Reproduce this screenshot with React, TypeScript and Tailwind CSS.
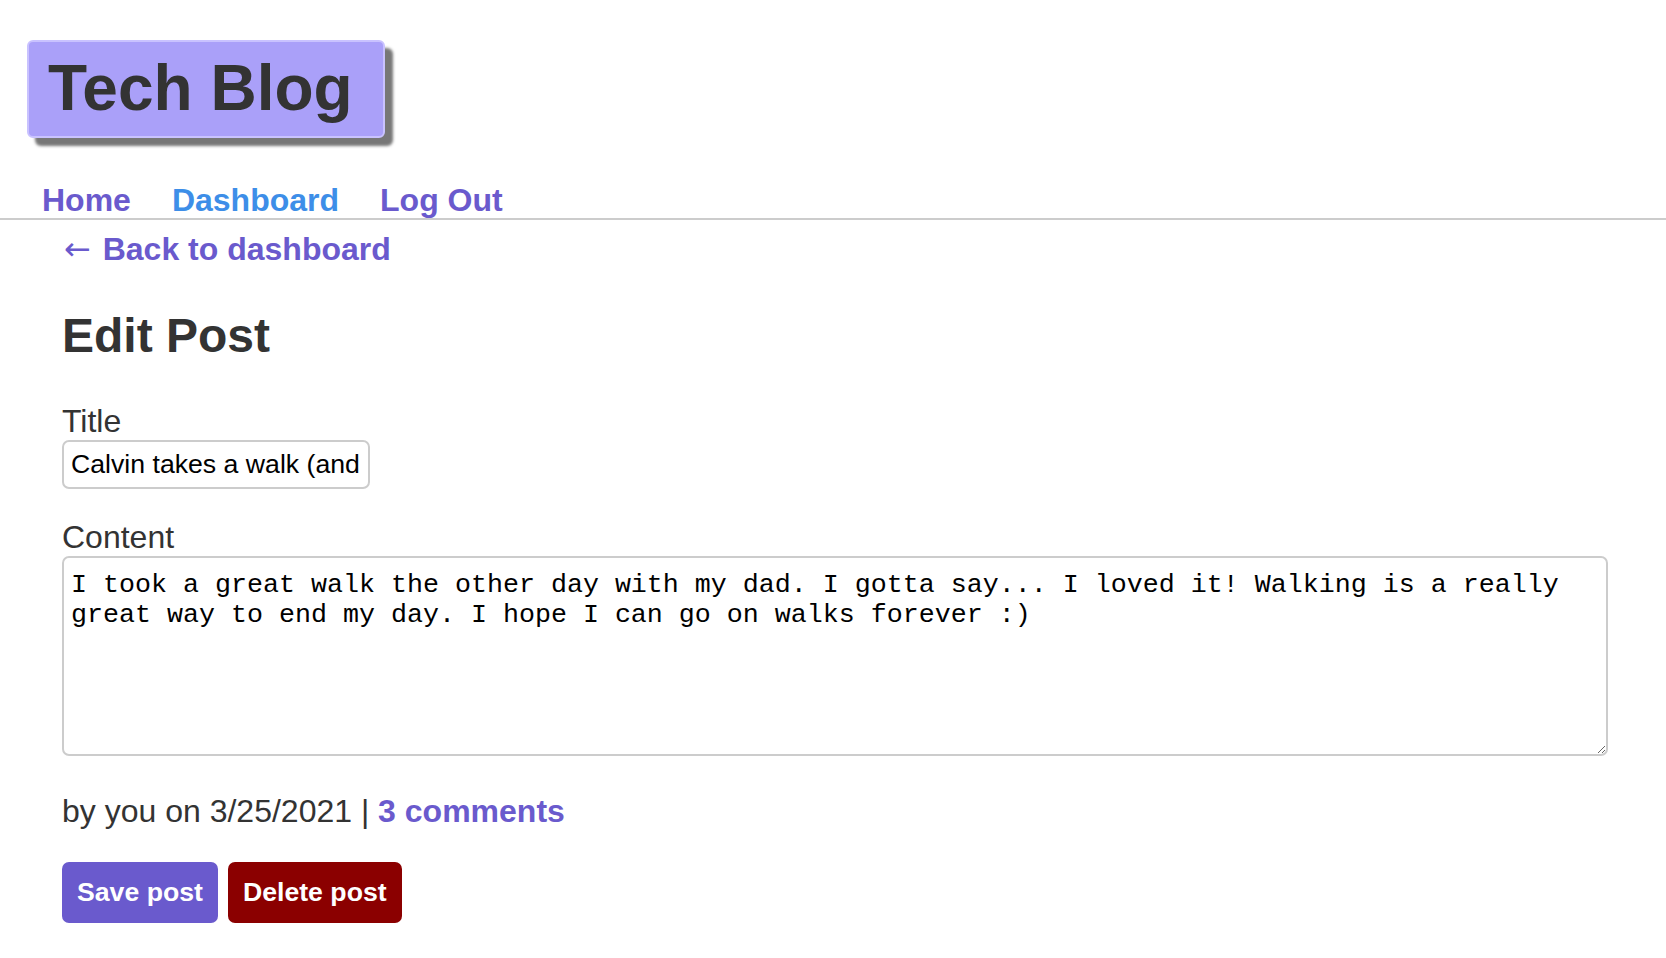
import { useState } from 'react';

export default function App() {
  const [title, setTitle] = useState('Calvin takes a walk (and his dad too)');
  const [content, setContent] = useState(
    'I took a great walk the other day with my dad. I gotta say... I loved it! Walking is a really great way to end my day. I hope I can go on walks forever :)'
  );

  return (
    <div className="min-h-screen bg-white text-[#333] font-['Liberation_Sans',Arial,sans-serif]">
      <header className="pt-[40px] pl-[27px]">
        <div className="inline-block rounded-md border-2 border-[#c9c2ff] bg-[#aaa0f9] pl-[19px] pr-[30px] py-[10px] shadow-[8px_8px_3px_#777]">
          <h1 className="text-[64px] font-bold leading-[1.15] text-[#333]">Tech Blog</h1>
        </div>
      </header>

      <nav className="mt-[44px] flex gap-[41px] border-b-2 border-[#ccc] pl-[42px] text-[32px] font-bold leading-[1.15]">
        <a href="#" className="text-[#6a5acd]">Home</a>
        <a href="#" className="text-[#3d8ee8]">Dashboard</a>
        <a href="#" className="text-[#6a5acd]">Log Out</a>
      </nav>

      <main className="pl-[62px] pr-[58px] pt-[11px]">
        <a href="#" className="text-[32px] font-bold leading-[1.15] text-[#6a5acd]">
          <span className="ml-[2px] mr-[3px] font-['DejaVu_Sans',sans-serif] font-normal">←</span> Back to dashboard
        </a>

        <h2 className="mt-[40px] text-[48px] font-bold leading-[1.15]">Edit Post</h2>

        <form className="mt-[40px]" onSubmit={(e) => e.preventDefault()}>
          <label className="block text-[32px] leading-[1.15]">Title</label>
          <input
            value={title}
            onChange={(e) => setTitle(e.target.value)}
            className="w-[308px] rounded-[7px] border-2 border-[#ccc] px-[7px] py-[7px] text-[26.67px] leading-[1.15] text-black outline-none"
          />

          <label className="mt-[30px] block text-[32px] leading-[1.15]">Content</label>
          <textarea
            value={content}
            onChange={(e) => setContent(e.target.value)}
            className="block h-[200px] w-full rounded-[7px] border-2 border-[#ccc] px-[7px] pt-[12px] pb-[4px] font-['Liberation_Mono','Courier_New',monospace] text-[26.67px] leading-[1.13] text-black outline-none"
          />

          <p className="mt-[37px] text-[32px] leading-[1.15]">
            by you on 3/25/2021 |{' '}
            <a href="#" className="font-bold text-[#6a5acd]">3 comments</a>
          </p>

          <div className="mt-[33px] flex gap-[10px]">
            <button className="rounded-[7px] bg-[#6a5acd] px-[15px] py-[15px] text-[26.67px] font-bold leading-[1.15] text-white">
              Save post
            </button>
            <button className="rounded-[7px] bg-[#8b0000] px-[15px] py-[15px] text-[26.67px] font-bold leading-[1.15] text-white">
              Delete post
            </button>
          </div>
        </form>
      </main>
    </div>
  );
}
